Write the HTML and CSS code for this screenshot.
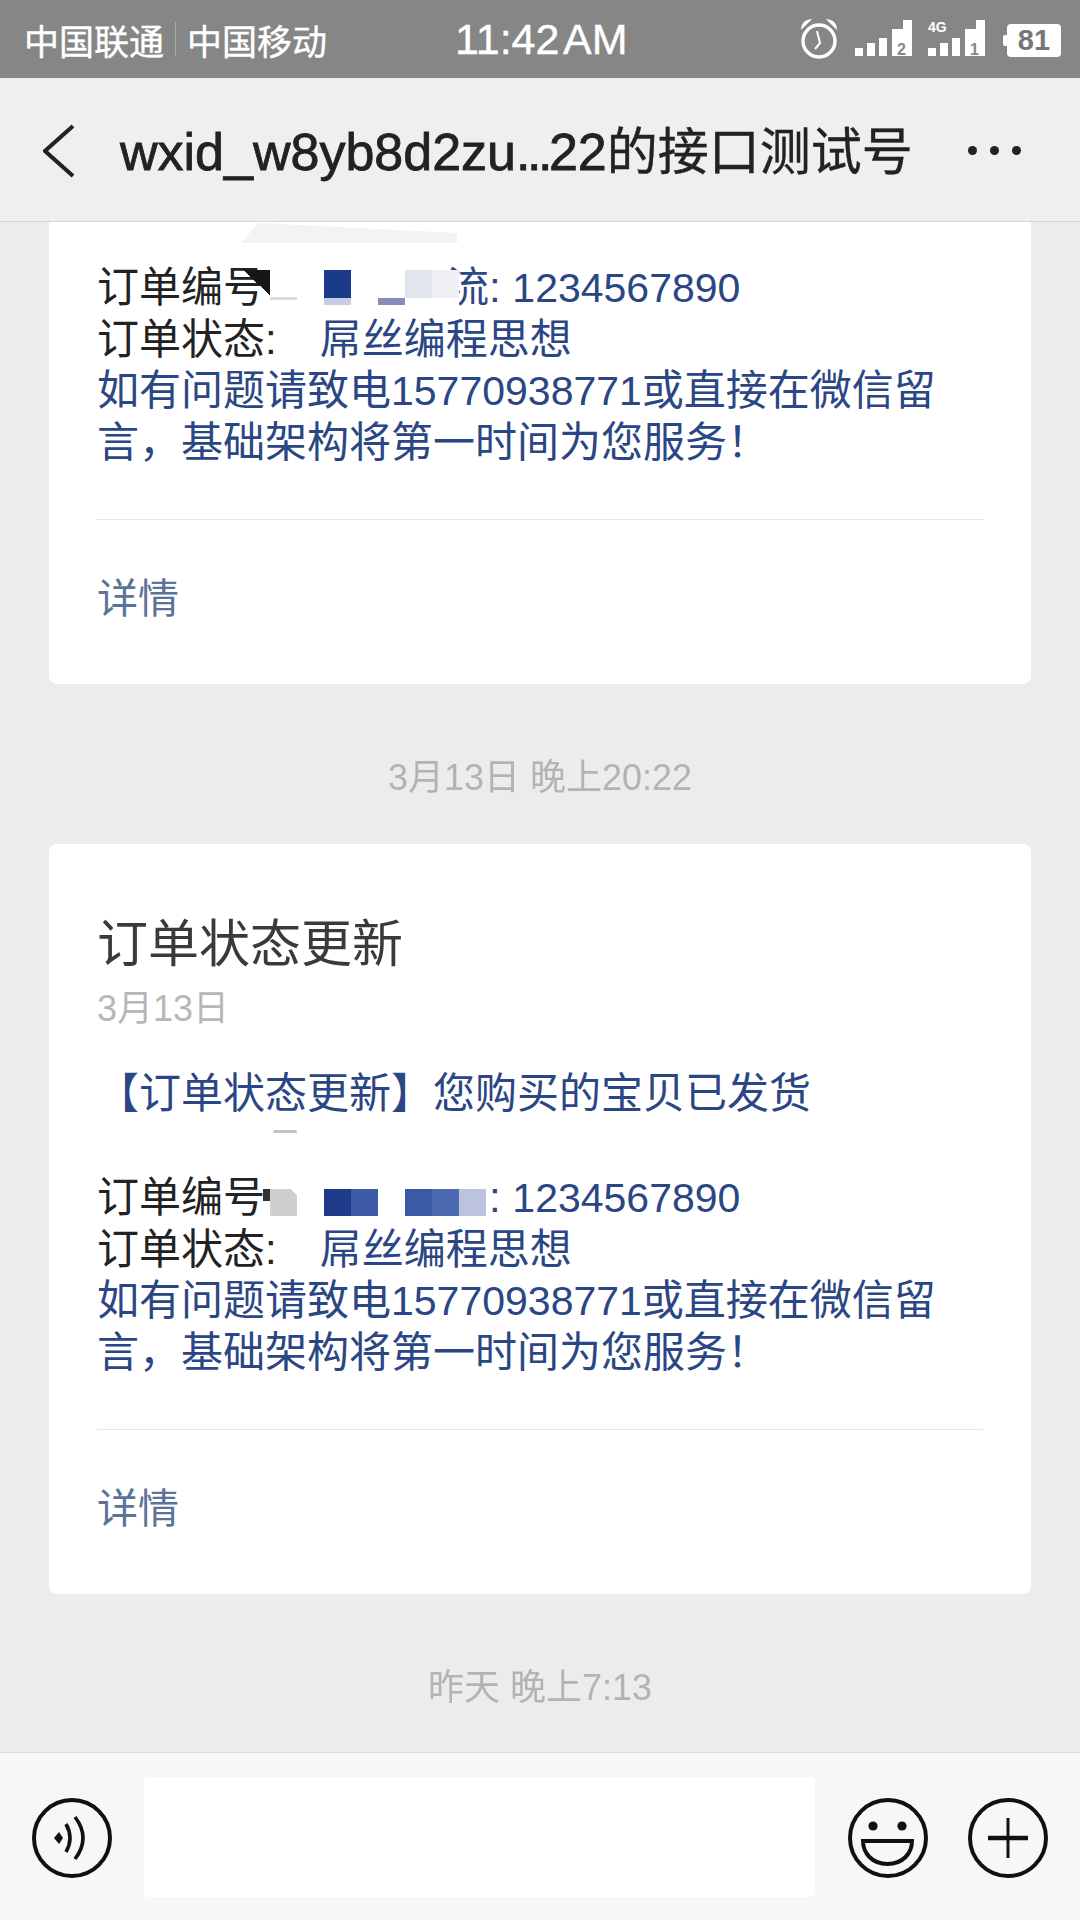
FILE: index.html
```html
<!DOCTYPE html>
<html lang="zh-CN">
<head>
<meta charset="utf-8">
<title>wxid_w8yb8d2zu...22的接口测试号</title>
<link rel="stylesheet" href="styles.css">
</head>
<body>
<div class="page">
  <header class="status">
    <div class="carriers"><span>中国联通</span><i class="carrier-sep"></i><span>中国移动</span></div>
    <div class="clock">11:42 AM</div>
    <div class="status-icons">
      <svg class="ic-alarm" width="38" height="42" viewBox="0 0 38 42"><circle cx="19" cy="23" r="16" fill="none" stroke="#fff" stroke-width="3.4"/><path d="M17 13 20 25 15 31" fill="none" stroke="#fff" stroke-width="2"/><path d="M2 10Q3 3 10 2ZM36 10Q35 3 28 2Z" fill="#fff" stroke="#fff" stroke-width="1.5"/></svg>
      <svg class="ic-sig" width="57" height="38" viewBox="0 0 57 38"><path d="M0 28h8v8H0zM12 23h8v13h-8zM24 18h8v18h-8zM37 9h11v27H37zM48 0h9v36h-9z" fill="#fff"/><text x="42" y="35" class="sig-num">2</text></svg>
      <svg class="ic-sig ic-sig4g" width="57" height="38" viewBox="0 0 57 38"><path d="M0 28h8v8H0zM12 23h8v13h-8zM24 18h8v18h-8zM37 9h11v27H37zM48 0h9v36h-9z" fill="#fff"/><text x="42" y="35" class="sig-num">1</text><text x="0" y="12" class="sig-4g">4G</text></svg>
      <div class="battery">81</div>
    </div>
  </header>

  <nav class="nav">
    <svg class="back" width="32" height="54" viewBox="0 0 32 54"><path d="M30 2 2 27l28 25" fill="none" stroke="#222" stroke-width="4"/></svg>
    <h1 class="nav-title">wxid_w8yb8d2zu<span class="ell">...</span>22<span class="nav-cjk">的接口测试号</span></h1>
    <div class="dots"><i></i><i></i><i></i></div>
  </nav>

  <main class="chat">
    <article class="card card-cut">
      <i class="ghost-a"></i>
      <div class="body">
        <p class="row dark"><span>订单编号</span><span class="sp-a"></span><span class="blue">流: <span class="num">1234567890</span></span>
          <span class="redact redact-a"><i class="t black"></i><i class="t whiteish"></i><i class="t"></i><i class="t blue1"></i><i class="t"></i><i class="t purple"></i><i class="t grey"></i><i class="t pale"></i></span>
        </p>
        <p class="row dark">订单状态:<span class="value">屌丝编程思想</span></p>
        <p class="row blue">如有问题请致电<span class="num">15770938771</span>或直接在微信留<br>言，基础架构将第一时间为您服务！</p>
      </div>
      <div class="more">详情</div>
    </article>

    <div class="time">3月13日 晚上20:22</div>

    <article class="card">
      <h2 class="card-title">订单状态更新</h2>
      <div class="card-date">3月13日</div>
      <div class="body">
        <p class="row blue">【订单状态更新】您购买的宝贝已发货</p>
        <p class="row blank"><i class="ghost-dash"></i></p>
        <p class="row dark"><span>订单编号</span><span class="sp-b"></span><span class="blue">: <span class="num">1234567890</span></span>
          <span class="redact redact-b"><i class="t sliver"></i><i class="t greyb"></i><i class="t clear"></i><i class="t blue2"></i><i class="t blue3"></i><i class="t clear"></i><i class="t blue4"></i><i class="t blue5"></i><i class="t lav"></i></span>
        </p>
        <p class="row dark">订单状态:<span class="value">屌丝编程思想</span></p>
        <p class="row blue">如有问题请致电<span class="num">15770938771</span>或直接在微信留<br>言，基础架构将第一时间为您服务！</p>
      </div>
      <div class="more">详情</div>
    </article>

    <div class="time">昨天 晚上7:13</div>
  </main>

  <footer class="composer">
    <svg class="tool" width="80" height="80" viewBox="0 0 80 80"><circle cx="40" cy="40" r="38" fill="none" stroke="#111" stroke-width="4"/><path d="M22 40l5-6 4 6-4 6z" fill="#111"/><path d="M34 26q8 14 0 28M43 19q16 21 0 42" fill="none" stroke="#111" stroke-width="3.6"/></svg>
    <div class="input"></div>
    <svg class="tool" width="80" height="80" viewBox="0 0 80 80"><circle cx="40" cy="40" r="38" fill="none" stroke="#111" stroke-width="4"/><circle cx="25" cy="28" r="4.6" fill="#111"/><circle cx="54" cy="28" r="4.6" fill="#111"/><path d="M15 43h49c0 12-9 23-24.500 23S15 55 15 43z" fill="none" stroke="#111" stroke-width="4"/></svg>
    <svg class="tool" width="80" height="80" viewBox="0 0 80 80"><circle cx="40" cy="40" r="38" fill="none" stroke="#111" stroke-width="4"/><path d="M20 40h40" fill="none" stroke="#111" stroke-width="4.500"/><path d="M40 20v40" fill="none" stroke="#111" stroke-width="3"/></svg>
  </footer>
</div>
</body>
</html>
```
FILE: styles.css
```css
* { box-sizing: border-box; margin: 0; padding: 0; }
html, body { width: 1080px; height: 1920px; overflow: hidden; }
body { font-family: "Liberation Sans", "Noto Sans CJK SC", sans-serif; background: #ececee; }
i { display: block; font-style: normal; }

.page { width: 1080px; height: 1920px; display: flex; flex-direction: column; filter: blur(0.6px); }

/* status bar */
.status { height: 78px; flex: none; background: #868686; color: #fff; display: flex; align-items: center; padding-left: 24px; }
.carriers { display: flex; align-items: center; width: 431px; font-size: 35px; gap: 11px; -webkit-text-stroke: 0.4px #fff; }
.carrier-sep { width: 1px; height: 34px; background: #aaa; }
.clock { width: 345px; font-size: 43px; word-spacing: -6px; -webkit-text-stroke: 0.4px #fff; }
.status-icons { display: flex; align-items: center; }
.ic-alarm { margin-right: 17px; }
.ic-sig { margin-right: 16px; }
.sig-num { font: 700 16px "Liberation Sans", sans-serif; fill: #868686; }
.sig-4g { font: 700 14px "Liberation Sans", sans-serif; fill: #fff; }
.battery { position: relative; width: 54px; height: 33px; margin-top: 2px; margin-left: 6px; background: #fff; border-radius: 4px; color: #777; font-size: 29px; font-weight: 700; line-height: 33px; text-align: center; }
.battery::before { content: ""; position: absolute; left: -4px; top: 11px; width: 4px; height: 11px; background: #fff; border-radius: 2px 0 0 2px; }

/* nav */
.nav { height: 144px; flex: none; background: #efefef; border-bottom: 1px solid #d6d6d6; display: flex; align-items: center; padding: 0 59px 0 43px; }
.back { flex: none; margin-top: 2px; }
.nav-title { font-size: 52px; font-weight: 500; color: #222; margin-left: 45px; margin-bottom: 4px; white-space: nowrap; -webkit-text-stroke: 0.8px #222; }
.ell { letter-spacing: -3.5px; }
.nav-cjk { font-size: 51px; font-weight: 400; -webkit-text-stroke: 0.4px #222; }
.dots { margin-left: auto; display: flex; gap: 13px; margin-top: 2px; }
.dots i { width: 9px; height: 9px; border-radius: 50%; background: #222; }

/* chat */
.chat { flex: 1; min-height: 0; overflow: hidden; padding: 0 49px; display: flex; flex-direction: column; }
.card { position: relative; flex: none; background: #fff; border-radius: 8px; padding: 0 48px; color: #333; }
.card-cut { border-radius: 0 0 8px 8px; padding-top: 40px; }
.ghost-a { position: absolute; left: 192px; top: 1px; width: 216px; height: 20px; background: #f3f3f4; clip-path: polygon(8% 0, 100% 50%, 100% 100%, 0 100%); }
.ghost-dash { width: 24px; height: 3px; margin-left: 176px; background: #c4c4c4; border-radius: 2px; position: relative; top: 11px; }
.card-title { font-size: 51px; font-weight: 400; line-height: 60px; padding-top: 71px; box-sizing: content-box; color: #3a3a3a; }
.card-date { font-size: 36px; line-height: 40px; margin-top: 14px; color: #b7b7b7; }
.card-date + .body { margin-top: 39px; }
.row { position: relative; font-size: 42px; line-height: 51px; white-space: nowrap; }
.blank { height: 53px; }
.dark { color: #222; }
.blue { color: #2b4684; }
.num { font-size: 41px; }
.value { color: #2b4684; margin-left: 43px; }
.sp-a, .sp-b { display: inline-block; }
.sp-a { width: 182px; }
.sp-b { width: 224px; }

.redact { position: absolute; left: 146px; display: flex; }
.redact-a { top: 8px; }
.redact-b { top: 17px; }
.t { width: 27px; height: 35px; }
.redact-b .t { height: 27px; }
.black { background: linear-gradient(to top right, transparent 50%, #161616 50%) top / 100% 25px no-repeat; }
.whiteish { background: linear-gradient(#fff 27px, #dcdcdc 27px, #dcdcdc 30px, #fff 30px); }
.blue1 { background: linear-gradient(#1b3a8a 28px, #c7cde2 28px); }
.purple { background: linear-gradient(#fff 28px, #8a8abb 28px); }
.grey { background: linear-gradient(#e3e5ec 28px, #fff 28px); }
.pale { background: linear-gradient(#eff0f6 28px, #fff 28px); }
.sliver { background: linear-gradient(to left, #333 7px, transparent 7px) top / 100% 12px no-repeat; }
.greyb { background: linear-gradient(to bottom left, transparent 4px, #cfcfcf 5px); }
.clear { background: #fff; }
.blue2 { background: #1e3a88; }
.blue3 { background: #3d5ba6; }
.blue4 { background: #3a5aa6; }
.blue5 { background: #4b6ab1; }
.lav { background: #bcc3dc; }

.more { margin-top: 51px; border-top: 1px solid #e6e6e6; padding-top: 54px; padding-bottom: 60px; font-size: 41px; line-height: 50px; color: #5c7399; }
.time { flex: none; height: 160px; padding-top: 74px; font-size: 36px; line-height: 40px; text-align: center; color: #b3b3b3; }

/* composer */
.composer { height: 168px; flex: none; background: #f7f7f8; border-top: 1px solid #dcdcdc; display: flex; align-items: center; padding: 0 30px 0 32px; }
.input { width: 671px; height: 120px; margin: 0 33px 0 32px; background: #fff; border-radius: 4px; }
.tool { flex: none; margin-top: 2px; }
.tool:last-child { margin-left: 40px; }
```
